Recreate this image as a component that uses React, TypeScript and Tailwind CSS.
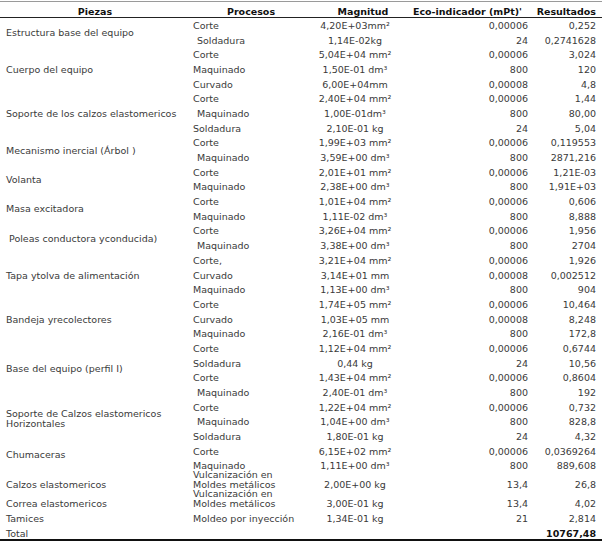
import React from 'react';

type Row = { proc: string; mag: string; eco: string; res: string; ind?: boolean };
type Group = { pieza: string[]; rows: Row[]; pad?: string; tall?: boolean; pl?: string };

const groups: Group[] = [
  {
    pieza: ['Estructura base del equipo'],
    rows: [
      { proc: 'Corte', mag: '4,20E+03mm²', eco: '0,00006', res: '0,252' },
      { proc: 'Soldadura', mag: '1,14E-02kg', eco: '24', res: '0,2741628', ind: true },
    ],
  },
  {
    pieza: ['Cuerpo del equipo'],
    rows: [
      { proc: 'Corte', mag: '5,04E+04 mm²', eco: '0,00006', res: '3,024' },
      { proc: 'Maquinado', mag: '1,50E-01 dm³', eco: '800', res: '120' },
      { proc: 'Curvado', mag: '6,00E+04mm', eco: '0,00008', res: '4,8' },
    ],
  },
  {
    pieza: ['Soporte de los calzos elastomericos'],
    rows: [
      { proc: 'Corte', mag: '2,40E+04 mm²', eco: '0,00006', res: '1,44' },
      { proc: 'Maquinado', mag: '1,00E-01dm³', eco: '800', res: '80,00', ind: true },
      { proc: 'Soldadura', mag: '2,10E-01 kg', eco: '24', res: '5,04' },
    ],
  },
  {
    pieza: ['Mecanismo inercial (Árbol )'],
    rows: [
      { proc: 'Corte', mag: '1,99E+03 mm²', eco: '0,00006', res: '0,119553' },
      { proc: 'Maquinado', mag: '3,59E+00 dm³', eco: '800', res: '2871,216', ind: true },
    ],
  },
  {
    pieza: ['Volanta'],
    rows: [
      { proc: 'Corte', mag: '2,01E+01 mm²', eco: '0,00006', res: '1,21E-03' },
      { proc: 'Maquinado', mag: '2,38E+00 dm³', eco: '800', res: '1,91E+03' },
    ],
  },
  {
    pieza: ['Masa excitadora'],
    rows: [
      { proc: 'Corte', mag: '1,01E+04 mm²', eco: '0,00006', res: '0,606' },
      { proc: 'Maquinado', mag: '1,11E-02 dm³', eco: '800', res: '8,888' },
    ],
  },
  {
    pieza: ['Poleas conductora yconducida)'],
    pl: 'pl-[9px]',
    rows: [
      { proc: 'Corte', mag: '3,26E+04 mm²', eco: '0,00006', res: '1,956' },
      { proc: 'Maquinado', mag: '3,38E+00 dm³', eco: '800', res: '2704', ind: true },
    ],
  },
  {
    pieza: ['Tapa ytolva de alimentación'],
    rows: [
      { proc: 'Corte,', mag: '3,21E+04 mm²', eco: '0,00006', res: '1,926' },
      { proc: 'Curvado', mag: '3,14E+01 mm', eco: '0,00008', res: '0,002512' },
      { proc: 'Maquinado', mag: '1,13E+00 dm³', eco: '800', res: '904' },
    ],
  },
  {
    pieza: ['Bandeja yrecolectores'],
    rows: [
      { proc: 'Corte', mag: '1,74E+05 mm²', eco: '0,00006', res: '10,464' },
      { proc: 'Curvado', mag: '1,03E+05 mm', eco: '0,00008', res: '8,248' },
      { proc: 'Maquinado', mag: '2,16E-01 dm³', eco: '800', res: '172,8' },
    ],
  },
  {
    pieza: ['Base del equipo (perfil I)'],
    pad: 'pb-[4px]',
    rows: [
      { proc: 'Corte', mag: '1,12E+04 mm²', eco: '0,00006', res: '0,6744' },
      { proc: 'Soldadura', mag: '0,44 kg', eco: '24', res: '10,56' },
      { proc: 'Corte', mag: '1,43E+04 mm²', eco: '0,00006', res: '0,8604' },
      { proc: 'Maquinado', mag: '2,40E-01 dm³', eco: '800', res: '192', ind: true },
    ],
  },
  {
    pieza: ['Soporte de Calzos elastomericos', 'Horizontales'],
    pad: 'pb-[5px]',
    rows: [
      { proc: 'Corte', mag: '1,22E+04 mm²', eco: '0,00006', res: '0,732' },
      { proc: 'Maquinado', mag: '1,04E+00 dm³', eco: '800', res: '828,8', ind: true },
      { proc: 'Soldadura', mag: '1,80E-01 kg', eco: '24', res: '4,32' },
    ],
  },
  {
    pieza: ['Chumaceras'],
    pad: 'pb-[8px]',
    rows: [
      { proc: 'Corte', mag: '6,15E+02 mm²', eco: '0,00006', res: '0,0369264' },
      { proc: 'Maquinado', mag: '1,11E+00 dm³', eco: '800', res: '889,608' },
    ],
  },
  {
    pieza: ['Calzos elastomericos'],
    tall: true,
    rows: [{ proc: 'Vulcanización en\nMoldes metálicos', mag: '2,00E+00 kg', eco: '13,4', res: '26,8' }],
  },
  {
    pieza: ['Correa elastomericos'],
    tall: true,
    rows: [{ proc: 'Vulcanización en\nMoldes metálicos', mag: '3,00E-01 kg', eco: '13,4', res: '4,02' }],
  },
  {
    pieza: ['Tamices'],
    rows: [{ proc: 'Moldeo por inyección', mag: '1,34E-01 kg', eco: '21', res: '2,814' }],
  },
];

const spanClass: Record<number, string> = {
  1: 'row-span-1',
  2: 'row-span-2',
  3: 'row-span-3',
  4: 'row-span-4',
};

const App = () => {
  return (
    <div className="w-[602px] h-[543px] bg-white pt-[1px] font-['DejaVu_Sans',sans-serif] text-[9.5px] leading-[11px] text-[#3a3a3a]">
      <div className="grid grid-cols-[190px_110px_110px_120px_72px] border-t border-t-[#9a9a9a] border-b-2 border-b-[#111]">
        {/* header */}
        <div className="h-[16px] flex items-end justify-center border-b border-[#222] font-bold text-[#111]">Piezas</div>
        <div className="h-[16px] flex items-end justify-center pl-[12px] border-b border-[#222] font-bold text-[#111]">Procesos</div>
        <div className="h-[16px] flex items-end justify-center pl-[16px] border-b border-[#222] font-bold text-[#111]">Magnitud</div>
        <div className="h-[16px] flex items-end justify-end pr-[8px] border-b border-[#222] font-bold text-[#111] whitespace-nowrap">Eco-indicador (mPt)'</div>
        <div className="h-[16px] flex items-end justify-end pr-[6px] border-b border-[#222] font-bold text-[#111]">Resultados</div>

        {groups.map((g, gi) => {
          const last = gi === groups.length - 1;
          const h = g.tall
            ? 'h-[19px] items-end pb-[2px] leading-[10px]'
            : last
              ? 'h-[15px] items-center'
              : 'h-[14.7px] items-center';
          return (
            <React.Fragment key={gi}>
              <div
                className={`${spanClass[g.rows.length]} flex ${g.tall ? 'items-end pb-[2px] leading-[10px]' : 'items-center'} ${g.pl ?? 'pl-[6px]'} ${g.pad ?? ''} whitespace-nowrap`}
              >
                <div className={g.pieza.length > 1 ? 'leading-[10px]' : ''}>
                  {g.pieza.map((p, i) => (
                    <div key={i}>{p}</div>
                  ))}
                </div>
              </div>
              {g.rows.map((r, ri) => (
                <React.Fragment key={ri}>
                  <div className={`${h} flex ${r.ind ? 'pl-[7px]' : 'pl-[3px]'} whitespace-pre`}>{r.proc}</div>
                  <div className={`${h} flex justify-center whitespace-nowrap`}>{r.mag}</div>
                  <div className={`${h} flex justify-end pr-[2px]`}>{r.eco}</div>
                  <div className={`${h} flex justify-end pr-[6px]`}>{r.res}</div>
                </React.Fragment>
              ))}
            </React.Fragment>
          );
        })}

        {/* total */}
        <div className="h-[12.3px] flex items-end pl-[6px]">Total</div>
        <div className="h-[12.3px]"></div>
        <div className="h-[12.3px]"></div>
        <div className="h-[12.3px]"></div>
        <div className="h-[12.3px] flex items-end justify-end pr-[6px] font-bold text-[#111]">10767,48</div>
      </div>
    </div>
  );
};

export default App;
